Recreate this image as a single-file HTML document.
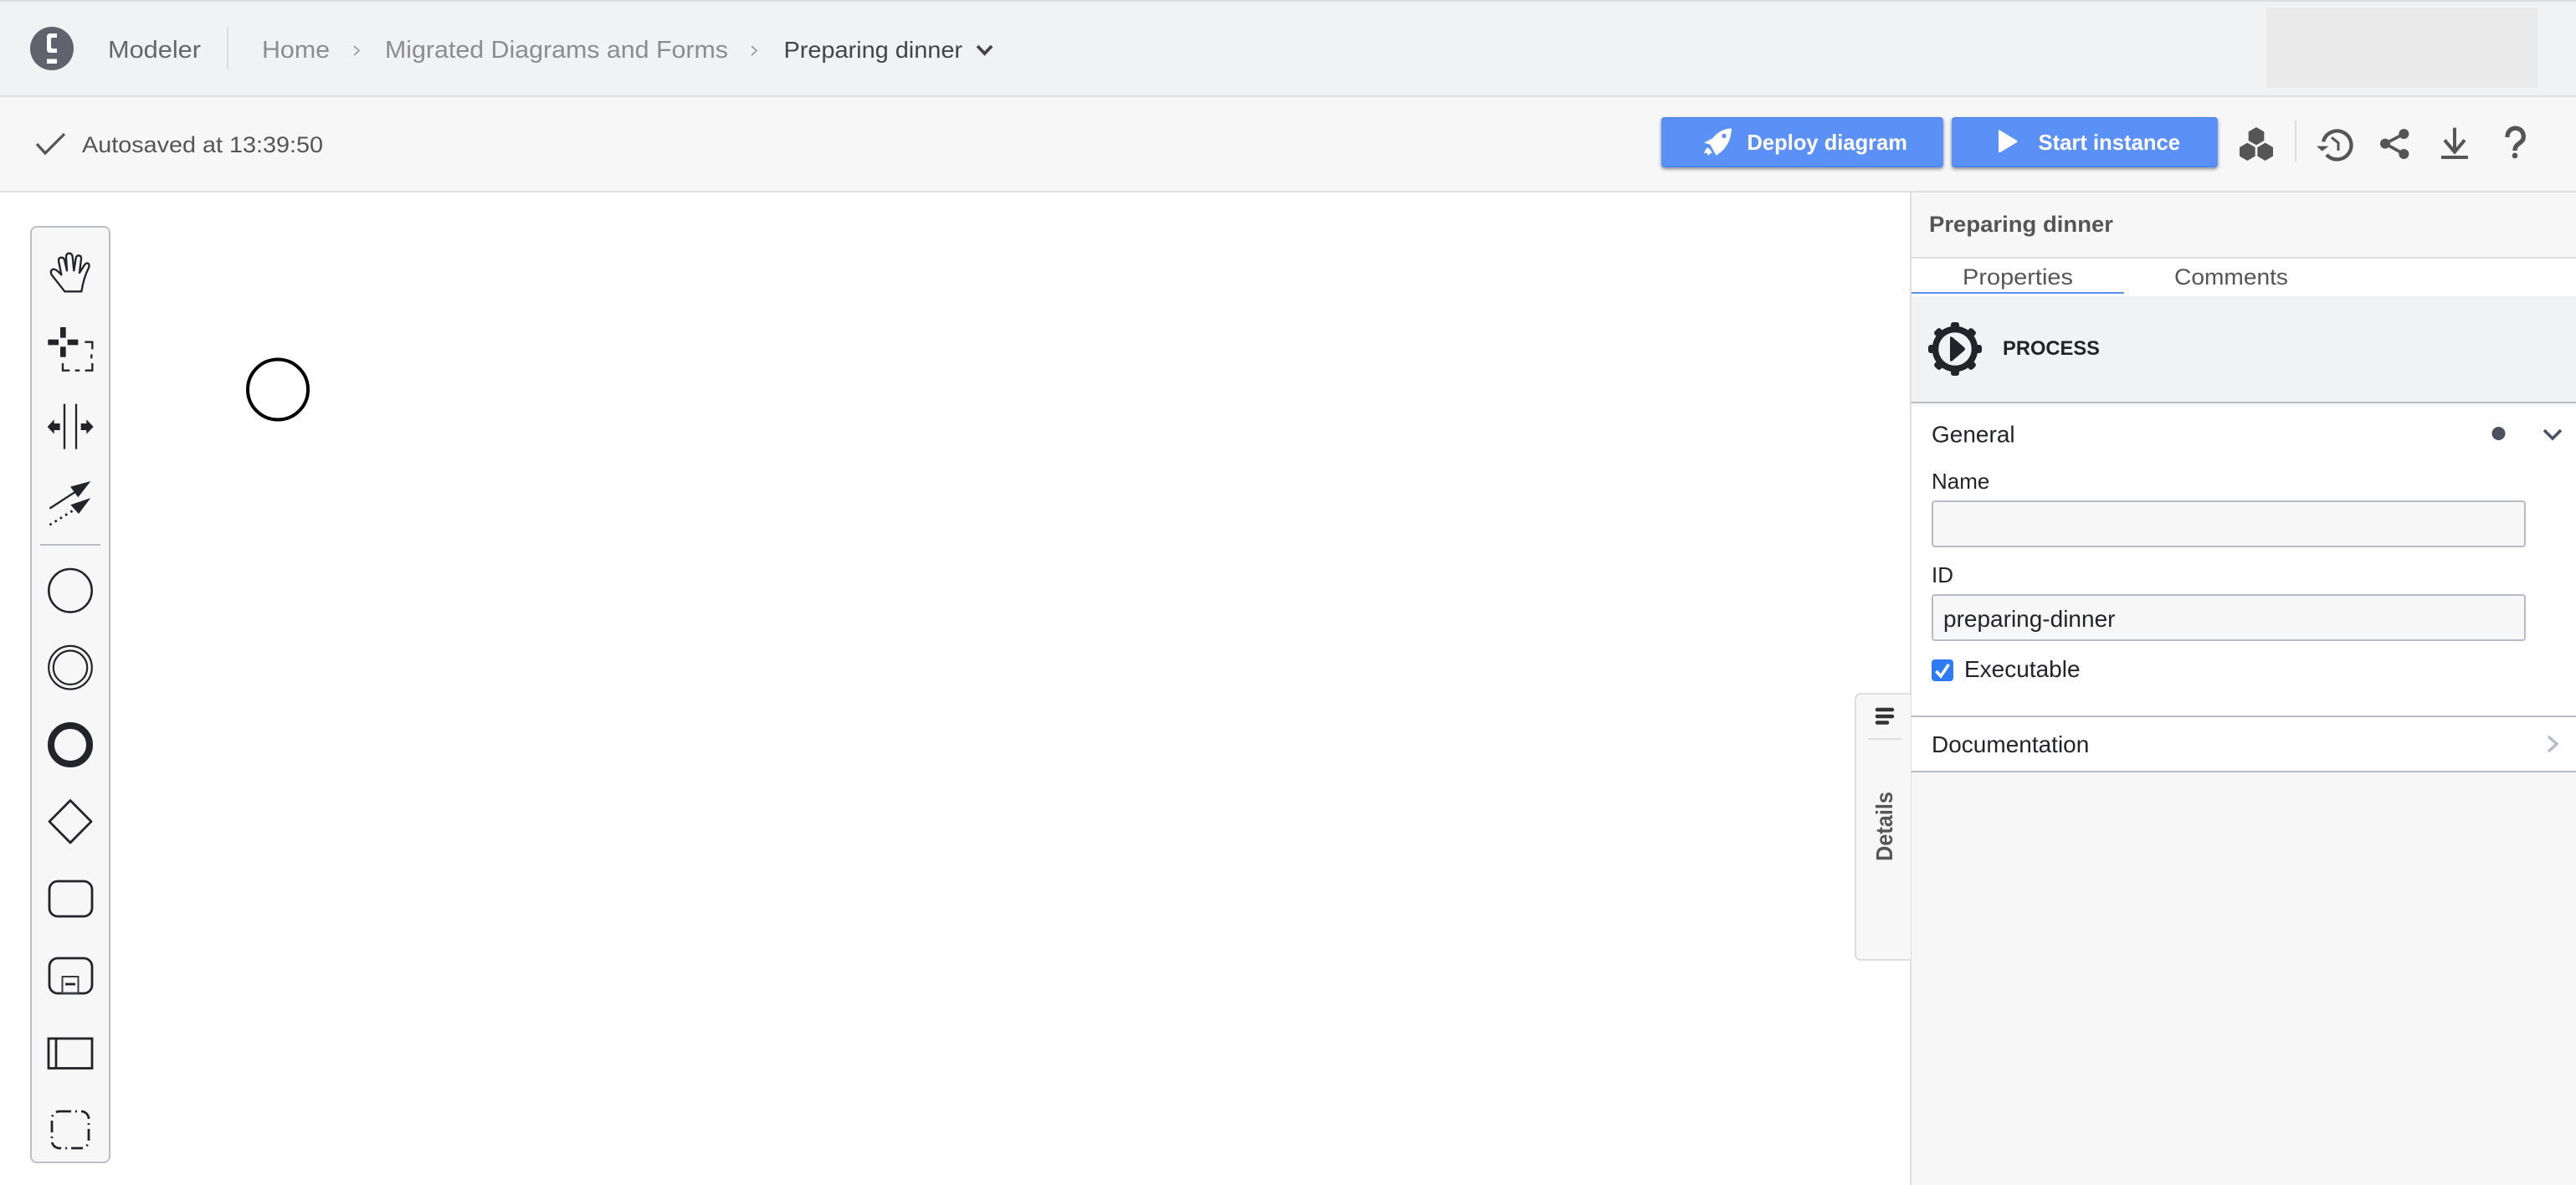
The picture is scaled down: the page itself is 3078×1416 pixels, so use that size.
<!DOCTYPE html>
<html lang="en">
<head>
<meta charset="utf-8">
<title>Modeler - Preparing dinner</title>
<style>
html,body{margin:0;padding:0;width:3078px;height:1416px;overflow:hidden;background:#fff}
.a{position:absolute;box-sizing:border-box}
svg{position:absolute;left:0;top:0}
text{font-family:"Liberation Sans",sans-serif}
</style>
</head>
<body>
<div class="a" style="left:0;top:0;width:3078px;height:115px;background:#f1f2f4;border-top:2px solid #dcdde0"></div>
<div class="a" style="left:0;top:114px;width:3078px;height:2px;background:#dedede"></div>
<div class="a" style="left:0;top:116px;width:3078px;height:114px;background:#f7f7f7;border-bottom:2px solid #dedede"></div>
<div class="a" style="left:2708px;top:9px;width:324px;height:96px;background:#eaeaea"></div>
<div class="a" style="left:1985px;top:140px;width:337px;height:60px;background:#5b91f7;border-radius:4px;border-top:2px solid #5088f2;border-bottom:2px solid #5088f2;box-shadow:0 2px 4px rgba(0,0,0,.45)"></div>
<div class="a" style="left:2332px;top:140px;width:318px;height:60px;background:#5b91f7;border-radius:4px;border-top:2px solid #5088f2;border-bottom:2px solid #5088f2;box-shadow:0 2px 4px rgba(0,0,0,.45)"></div>
<!-- palette -->
<div class="a" style="left:36px;top:270px;width:96px;height:1120px;background:#f7f7f7;border:2px solid #bcbfc9;border-radius:8px"></div>
<!-- panel -->
<div class="a" style="left:2282px;top:230px;width:796px;height:1186px;background:#f7f7f7;border-left:2px solid #dedede"></div>
<div class="a" style="left:2284px;top:307px;width:794px;height:2px;background:#dedede"></div>
<div class="a" style="left:2284px;top:309px;width:794px;height:45px;background:#fff"></div>
<div class="a" style="left:2284px;top:349px;width:254px;height:2px;background:#5b8ff0"></div>
<div class="a" style="left:2284px;top:354px;width:794px;height:126px;background:#f1f2f4"></div>
<div class="a" style="left:2284px;top:480px;width:794px;height:2px;background:#b9bcc6"></div>
<div class="a" style="left:2284px;top:486px;width:794px;height:370px;background:#fff"></div>
<div class="a" style="left:2284px;top:855px;width:794px;height:2px;background:#b9bcc6"></div>
<div class="a" style="left:2284px;top:857px;width:794px;height:65px;background:#fff"></div>
<div class="a" style="left:2284px;top:921px;width:794px;height:2px;background:#b9bcc6"></div>
<div class="a" style="left:2308px;top:598px;width:710px;height:56px;background:#f7f7f7;border:2px solid #b9bcc6;border-radius:4px"></div>
<div class="a" style="left:2308px;top:710px;width:710px;height:56px;background:#f7f7f7;border:2px solid #b9bcc6;border-radius:4px"></div>
<div class="a" style="left:2308px;top:788px;width:26px;height:26px;background:#2f7bf6;border-radius:4px"></div>
<!-- details tab -->
<div class="a" style="left:2216px;top:828px;width:67px;height:320px;background:#f7f7f7;border:2px solid #dedede;border-right:0;border-radius:7px 0 0 7px"></div>

<svg width="3078" height="1416" viewBox="0 0 3078 1416" xmlns="http://www.w3.org/2000/svg">
<!-- logo -->
<circle cx="62" cy="58" r="26" fill="#62626e"/>
<path d="M68 40 L60 40 Q56 40 56 44 L56 59 Q56 63 60 63 L68 63 L68 58 L63 58 Q61 58 61 56 L61 47 Q61 45 63 45 L68 45 Z" fill="#fff"/>
<rect x="56" y="70.5" width="12" height="5.5" fill="#fff"/>
<text x="129" y="69" font-size="29" fill="#666" textLength="111" lengthAdjust="spacingAndGlyphs">Modeler</text>
<rect x="271" y="32" width="2" height="51" fill="#dedede"/>
<text x="313" y="69" font-size="29" fill="#8c8c8c" textLength="81" lengthAdjust="spacingAndGlyphs">Home</text>
<path d="M423 55 L429 60.5 L423 66" fill="none" stroke="#999" stroke-width="1.6"/>
<text x="460" y="69" font-size="29" fill="#8c8c8c" textLength="410" lengthAdjust="spacingAndGlyphs">Migrated Diagrams and Forms</text>
<path d="M898 55 L904 60.5 L898 66" fill="none" stroke="#999" stroke-width="1.6"/>
<text x="936.5" y="69" font-size="28" fill="#444" textLength="213.5" lengthAdjust="spacingAndGlyphs">Preparing dinner</text>
<path d="M1168 55 L1176.5 64 L1185 55" fill="none" stroke="#444" stroke-width="3.8"/>

<!-- toolbar -->
<path d="M44 172 L54 183 L77 160" fill="none" stroke="#555" stroke-width="3.2"/>
<text x="98" y="182" font-size="27" fill="#555" textLength="288" lengthAdjust="spacingAndGlyphs">Autosaved at 13:39:50</text>
<g transform="translate(1980 130) scale(.3333)" fill="#fff">
<path d="M267 70 C235 72 215 85 200 105 L168 122 L190 128 L205 155 L212 168 L235 150 C258 125 266 100 267 70 Z"/>
<circle cx="240" cy="97" r="8" fill="#5b91f7"/>
<path d="M180 138 L190 146 L198 158 L190 160 L184 168 L178 158 L168 160 L172 150 Z"/>
</g>
<text x="2087.5" y="179" font-size="26" font-weight="700" fill="#fff" textLength="191.5" lengthAdjust="spacingAndGlyphs">Deploy diagram</text>
<path d="M2388 156 Q2388 154 2390 156 L2410 168 Q2411 169 2410 170 L2390 182 Q2388 183 2388 181 Z" fill="#fff"/>
<text x="2435.5" y="179" font-size="26" font-weight="700" fill="#fff" textLength="169.5" lengthAdjust="spacingAndGlyphs">Start instance</text>

<g transform="translate(2640 130) scale(.3333)">
<g fill="#555">
<path d="M168 66 L196 82 L196 114 L168 130 L140 114 L140 82 Z"/>
<path d="M136 122 L164 138 L164 170 L136 186 L108 170 L108 138 Z"/>
<path d="M200 122 L228 138 L228 170 L200 186 L172 170 L172 138 Z"/>
</g>
<rect x="306" y="42" width="6" height="149" fill="#ddd"/>
<g fill="none" stroke="#555" stroke-width="13">
<path d="M408 118 A51 51 0 1 1 420 165"/>
<path d="M438 103 L462 122 L462 150" stroke-width="9"/>
</g>
<path d="M384 134 L428 134 L404 152 Z" fill="#555"/>
<g fill="#555">
<circle cx="697" cy="90" r="18"/><circle cx="630" cy="125" r="18"/><circle cx="697" cy="162" r="18"/>
</g>
<path d="M697 90 L630 125 L697 162" fill="none" stroke="#555" stroke-width="11"/>
<path d="M879 68 L879 155 M843 112 L879 155 L915 112" fill="none" stroke="#555" stroke-width="12"/>
<rect x="831" y="168" width="96" height="12" fill="#555"/>
<path d="M1068 102 C1068 58 1126 60 1126 100 C1126 125 1095 122 1095 150" fill="none" stroke="#555" stroke-width="16"/>
<circle cx="1095" cy="168" r="10" fill="#555"/>
</g>

<!-- canvas start event -->
<circle cx="332" cy="465.5" r="36" fill="#fff" stroke="#000" stroke-width="4"/>

<!-- palette icons -->
<g transform="translate(20 260) scale(.3333)" stroke="#22242a" fill="none">
<path d="M172 265 L125 205 Q118 190 130 185 Q140 183 160 205 L150 155 Q150 143 160 143 Q170 143 172 155 L180 190 L177 140 Q178 128 188 128 Q198 128 200 140 L205 190 L212 145 Q215 135 223 136 Q232 137 231 148 L225 198 L243 170 Q250 160 257 165 Q262 172 258 180 Q240 215 232 265 Z" stroke-width="7" stroke-linejoin="round"/>
<g fill="#22242a" stroke="none">
<rect x="112" y="437" width="38" height="20"/><rect x="182" y="437" width="38" height="20"/>
<rect x="156" y="393" width="20" height="38"/><rect x="156" y="463" width="20" height="37"/>
</g>
<path d="M244 446 L271 446 L271 472 M268 490 L268 505 M271 522 L271 548 L245 548 M226 548 L209 548 M190 548 L165 548 L165 522" stroke-width="7"/>
<path d="M171 668 L171 830 M213 668 L213 830" stroke-width="7"/>
<g fill="#22242a" stroke="none">
<path d="M110 750 L134 724 L134 738 L155 738 L155 762 L134 762 L134 776 Z"/>
<path d="M275 750 L250 724 L250 738 L230 738 L230 762 L250 762 L250 776 Z"/>
<path d="M265 945 L192 965 L220 1003 Z"/>
<path d="M265 1005 L193 1030 L222 1062 Z"/>
</g>
<path d="M118 1043 L212 982" stroke-width="7"/>
<path d="M118 1102 L210 1045" stroke-width="8" stroke-dasharray="8 14"/>
</g>
<rect x="48" y="650" width="72" height="2" fill="#b9bcc6"/>
<g stroke="#22242a" fill="none">
<circle cx="84" cy="705.7" r="25.7" stroke-width="2.6"/>
<circle cx="84" cy="797.7" r="25.8" stroke-width="2.2"/>
<circle cx="84" cy="797.7" r="20.2" stroke-width="2.2"/>
<circle cx="84" cy="890" r="23" stroke-width="8"/>
<path d="M84 956.5 L109 981.7 L84 1007 L59 981.7 Z" stroke-width="2.8" stroke-linejoin="round"/>
<rect x="59" y="1053" width="51" height="42" rx="10" stroke-width="2.8"/>
<rect x="59" y="1145" width="51" height="42" rx="10" stroke-width="2.8"/>
<rect x="74.5" y="1167" width="19" height="20" stroke-width="2" stroke="#3a3c44"/>
<path d="M78 1176 L90 1176" stroke-width="2.8"/>
<rect x="58" y="1241" width="52" height="35.5" stroke-width="2.8"/>
<path d="M67 1241 L67 1277" stroke-width="2.8"/>
<rect x="62" y="1328" width="44" height="44" rx="9" stroke-width="2.8" stroke-dasharray="14 5 2 5"/>
</g>

<!-- panel -->
<text x="2305" y="277" font-size="27" font-weight="700" fill="#555" textLength="220" lengthAdjust="spacingAndGlyphs">Preparing dinner</text>
<text x="2345" y="340" font-size="27" fill="#555" textLength="132" lengthAdjust="spacingAndGlyphs">Properties</text>
<text x="2598" y="340" font-size="27" fill="#555" textLength="136" lengthAdjust="spacingAndGlyphs">Comments</text>
<g transform="translate(2336 417)" fill="#22242a">
<rect x="-5" y="-32" width="10" height="64" rx="3"/>
<rect x="-5" y="-32" width="10" height="64" rx="3" transform="rotate(45)"/>
<rect x="-5" y="-32" width="10" height="64" rx="3" transform="rotate(90)"/>
<rect x="-5" y="-32" width="10" height="64" rx="3" transform="rotate(135)"/>
<circle r="23.5" fill="#f1f2f4" stroke="#22242a" stroke-width="7.5"/>
<path d="M-6 -13 Q-6 -16 -3 -14 L11 -2 Q13 0 11 2 L-3 14 Q-6 16 -6 13 Z"/>
</g>
<text x="2393" y="424" font-size="24" font-weight="700" fill="#22242a" textLength="116" lengthAdjust="spacingAndGlyphs">PROCESS</text>
<text x="2308" y="528.5" font-size="28" fill="#22242a">General</text>
<circle cx="2985.5" cy="518" r="8" fill="#4d5060"/>
<path d="M3040 514 L3050 524 L3060 514" fill="none" stroke="#4d5060" stroke-width="3.6"/>
<text x="2308" y="584" font-size="26" fill="#22242a">Name</text>
<text x="2308" y="696" font-size="26" fill="#22242a">ID</text>
<text x="2322" y="749" font-size="28" fill="#22242a">preparing-dinner</text>
<path d="M2313.5 802 L2319 808 L2328.5 794" fill="none" stroke="#fff" stroke-width="3.6"/>
<text x="2347" y="809" font-size="28" fill="#22242a">Executable</text>
<text x="2308" y="899" font-size="28" fill="#22242a">Documentation</text>
<path d="M3045 880 L3055 889 L3045 898" fill="none" stroke="#b9bcc6" stroke-width="3.4"/>

<!-- details tab -->
<g fill="none" stroke="#333" stroke-width="4.5" stroke-linecap="round">
<path d="M2243 848 L2261 848 M2243 856 L2261 856 M2243 863.5 L2255 863.5"/>
</g>
<rect x="2232" y="882" width="40" height="2" fill="#dedede"/>
<text transform="translate(2261 1029) rotate(-90)" font-size="28" font-weight="700" fill="#555" textLength="83" lengthAdjust="spacingAndGlyphs">Details</text>
</svg>
</body>
</html>
